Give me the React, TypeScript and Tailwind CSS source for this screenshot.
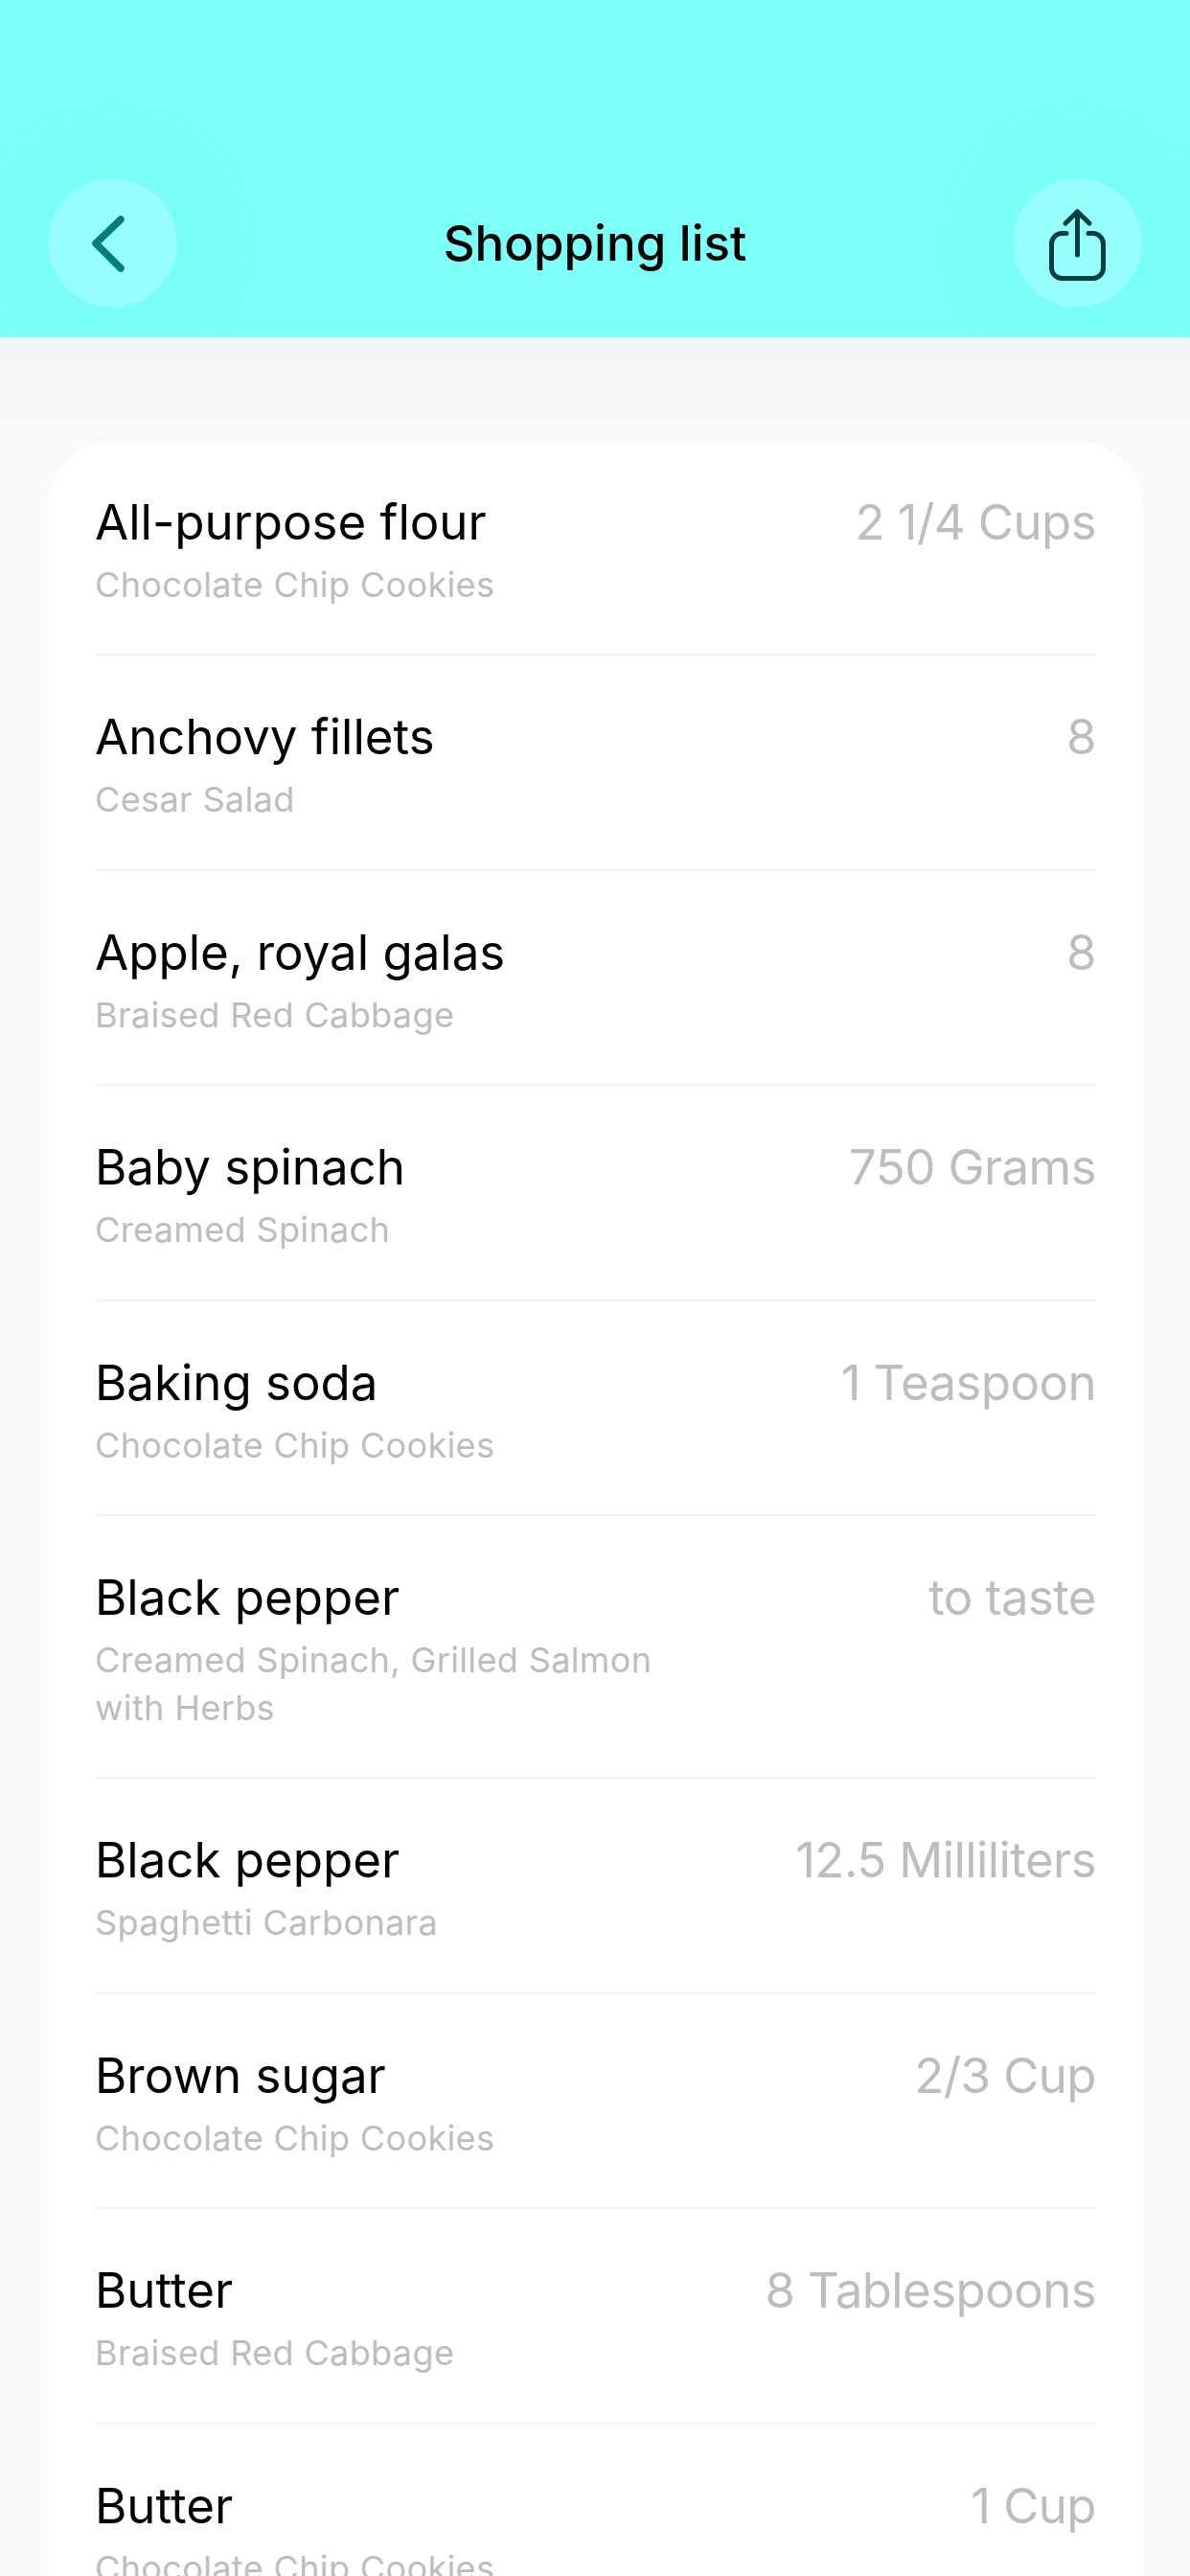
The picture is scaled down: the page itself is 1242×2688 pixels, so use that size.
const items = [
  { name: 'All-purpose flour', recipe: 'Chocolate Chip Cookies', amount: '2 1/4 Cups' },
  { name: 'Anchovy fillets', recipe: 'Cesar Salad', amount: '8' },
  { name: 'Apple, royal galas', recipe: 'Braised Red Cabbage', amount: '8' },
  { name: 'Baby spinach', recipe: 'Creamed Spinach', amount: '750 Grams' },
  { name: 'Baking soda', recipe: 'Chocolate Chip Cookies', amount: '1 Teaspoon' },
  { name: 'Black pepper', recipe: 'Creamed Spinach, Grilled Salmon with Herbs', amount: 'to taste' },
  { name: 'Black pepper', recipe: 'Spaghetti Carbonara', amount: '12.5 Milliliters' },
  { name: 'Brown sugar', recipe: 'Chocolate Chip Cookies', amount: '2/3 Cup' },
  { name: 'Butter', recipe: 'Braised Red Cabbage', amount: '8 Tablespoons' },
  { name: 'Butter', recipe: 'Chocolate Chip Cookies', amount: '1 Cup' },
]

const BackIcon = () => (
  <svg width="135" height="135" viewBox="0 0 135 135" fill="none">
    <path d="M76 43 L50 68 L76 94" stroke="#007f78" strokeWidth="7.5" strokeLinecap="round" strokeLinejoin="round" />
  </svg>
)

const ShareIcon = () => (
  <svg width="135" height="135" viewBox="0 0 135 135" fill="none" stroke="#003f3f" strokeWidth="5" strokeLinecap="round" strokeLinejoin="round">
    <path d="M56 57.5 H51.5 A11 11 0 0 0 40.5 68.5 V93.5 A11 11 0 0 0 51.5 104.5 H83.5 A11 11 0 0 0 94.5 93.5 V68.5 A11 11 0 0 0 83.5 57.5 H79" />
    <path d="M67.5 80 V35" />
    <path d="M55 47 L67.5 35 L80 47" />
  </svg>
)

export default function App() {
  return (
    <div className="h-[2688px] w-[1242px] overflow-hidden bg-[#f8f9fb] font-['Inter',sans-serif]">
      <header className="flex h-[352px] items-end overflow-hidden bg-[#7bfff7] px-[50px] pb-[31px]">
        <div className="flex h-[135px] w-[135px] items-center justify-center rounded-full bg-[#96fffb] shadow-[0_0_60px_10px_#76fdf3]">
          <BackIcon />
        </div>
        <h1 className="flex h-[135px] flex-1 items-center justify-center pt-[2px] text-[51px] font-medium text-black">
          Shopping list
        </h1>
        <div className="flex h-[135px] w-[135px] items-center justify-center rounded-full bg-[#96fffb] shadow-[0_0_60px_10px_#76fdf3]">
          <ShareIcon />
        </div>
      </header>

      <main className="bg-gradient-to-b from-[#f4f5f7] to-[#f8f9fb] to-[110px] pt-[108px] pr-[49px] pl-[50px]">
        <div className="rounded-[70px] bg-white px-[49px]">
          {items.map((item, index) => (
            <div key={index} className="flex justify-between border-b-2 border-[#f2f3f5] pt-[55px] pb-[47.4px] last:border-b-0">
              <div className="w-[600px]">
                <p className="text-[51px] leading-[60px] text-black">{item.name}</p>
                <p className="mt-[10px] text-[36px] leading-[50px] tracking-[0.37px] text-[#bdbdbd]">{item.recipe}</p>
              </div>
              <p className="text-[51px] leading-[60px] tracking-[-0.6px] text-[#bdbdbd]">{item.amount}</p>
            </div>
          ))}
        </div>
      </main>
    </div>
  )
}
